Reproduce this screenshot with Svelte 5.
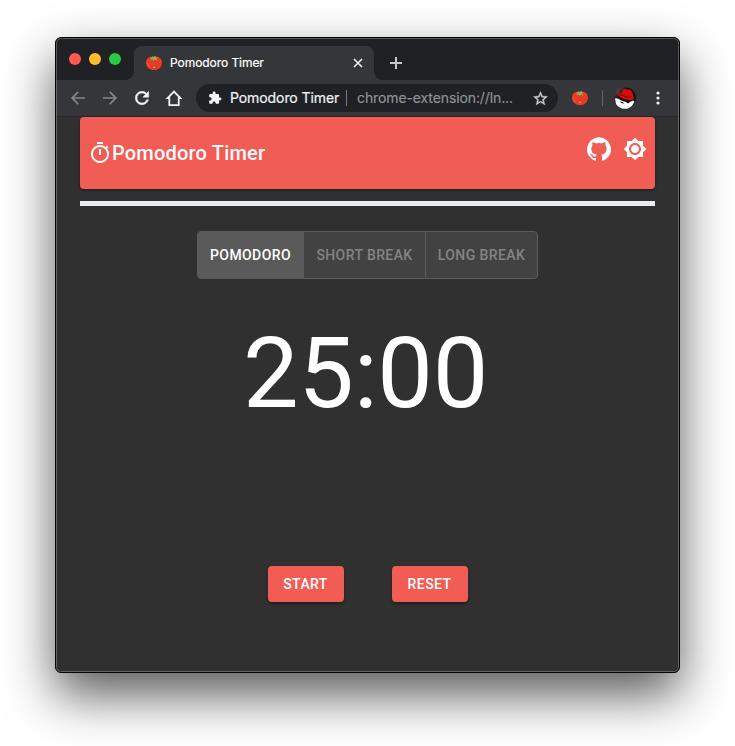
<script>
  let modes = ['Pomodoro', 'Short Break', 'Long Break'];
  let widths = [105, 122, 112];
  let active = $state(0);
</script>

{#snippet tomato()}
  <svg class="tomato" viewBox="0 0 16 16">
    <path d="M8 2C12.800.900 16 3.600 16 7.600c0 2.600-1 4.600-2.800 5.900C11.900 14.600 10 15 8 15s-3.900-.4-5.200-1.500C1 12.200 0 10.200 0 7.600 0 3.600 3.200.900 8 2z" fill="#e63b24" />
    <path d="M1.400 6.500c-.5 3 .4 5.200 2.400 6.500C2.900 11 2.200 9 1.400 6.500z" fill="#f2604a" />
    <path d="M3.600 2.300l2.900.4L6.100.700l1.600 1.200L9.800.500l-.2 2 3.100.1-2.400 1.200.8 1.700-2.500-1.100L7.500 6 6.500 4.300 4 5l1.200-1.500z" fill="#9bb04c" />
    <circle cx="8" cy="12.300" r=".9" fill="#ff9a86" />
  </svg>
{/snippet}

<div class="desktop">
  <div class="window">
    <div class="tabstrip">
      <div class="lights"><i class="red"></i><i class="amber"></i><i class="green"></i></div>
      <div class="tab">
        {@render tomato()}
        <span class="tab-title">Pomodoro Timer</span>
        <svg class="close" viewBox="0 0 10 10"><path d="M1 1l8 8M9 1L1 9" /></svg>
      </div>
      <svg class="plus" viewBox="0 0 12 12"><path d="M6 0v12M0 6h12" /></svg>
    </div>

    <div class="toolbar">
      <svg class="ico dim" viewBox="0 0 24 24"><path d="M20.500 11H7.330l5.590-5.590L11.500 4l-8 8 8 8 1.410-1.410L7.330 13H20.500v-2z" /></svg>
      <svg class="ico dim" viewBox="0 0 24 24"><path d="M12.500 4l-1.410 1.410L16.670 11H3.500v2h13.170l-5.580 5.590L12.500 20l8-8z" /></svg>
      <svg class="ico" viewBox="0 0 24 24"><path d="M17.650 6.350C16.200 4.900 14.210 4 12 4c-4.420 0-7.990 3.580-7.990 8s3.570 8 7.990 8c3.730 0 6.840-2.550 7.730-6h-2.080c-.82 2.330-3.040 4-5.650 4-3.310 0-6-2.690-6-6s2.690-6 6-6c1.660 0 3.140.69 4.220 1.780L13 11h7V4l-2.350 2.350z" stroke="#f1f3f4" stroke-width=".6" /></svg>
      <svg class="ico home" viewBox="0 0 20 20"><path d="M3.600 10.200H5.300v7h9.400v-7h1.700L10 3.600z" /></svg>
      <div class="omnibox">
        <svg class="puzzle" viewBox="0 0 24 24"><path d="M20.500 11H19V7c0-1.100-.9-2-2-2h-4V3.500C13 2.120 11.880 1 10.500 1S8 2.120 8 3.500V5H4c-1.100 0-1.990.9-1.990 2v3.800H3.500c1.490 0 2.700 1.210 2.700 2.700s-1.210 2.700-2.700 2.700H2V20c0 1.100.9 2 2 2h3.800v-1.500c0-1.490 1.210-2.700 2.700-2.700 1.490 0 2.700 1.210 2.700 2.700V22H17c1.100 0 2-.9 2-2v-4h1.500c1.380 0 2.500-1.120 2.500-2.500S21.880 11 20.500 11z" /></svg>
        <span class="origin">Pomodoro Timer</span>
        <span class="bar"></span>
        <span class="url">chrome-extension://ln...</span>
        <svg class="star" viewBox="0 0 24 24"><path d="M22 9.240l-7.190-.62L12 2 9.190 8.630 2 9.240l5.460 4.730L5.820 21 12 17.270 18.180 21l-1.630-7.030L22 9.240zM12 15.400l-3.760 2.270 1-4.280-3.320-2.880 4.380-.38L12 6.100l1.710 4.040 4.380.38-3.320 2.880 1 4.280L12 15.400z" /></svg>
      </div>
      <div class="ext">{@render tomato()}</div>
      <span class="sep"></span>
      <svg class="avatar" viewBox="0 0 22 22">
        <defs>
          <clipPath id="face"><circle cx="11" cy="11" r="10.800" /></clipPath>
          <linearGradient id="shine" x1="0" y1="0" x2="1" y2="1"><stop offset="0" stop-color="#777" /><stop offset=".35" stop-color="#0c0d0e" /></linearGradient>
        </defs>
        <g clip-path="url(#face)">
          <rect width="22" height="22" fill="url(#shine)" />
          <path d="M1 11.500c2-.6 3.500.5 5.500 1.600 2 1.100 3.500 1.700 5 1.700l2.500 1.800 2.500-2c1.500-.2 2-.8 2.700-1.400l1.300 1.500L18 19l-4 3H7l-5-4z" fill="#fff" />
          <path d="M5.500 14.500l3 .5 2 1.600-2.800-.4z" fill="#17191a" />
          <path d="M3.300 5.800c1.500-.8 3 .2 4.200.7L8.800 2.800C10.300 1.600 12 2.300 13.500 2.600c2.500-.6 4 .4 4.800 2.900l1.200 4c1.500 2.200-.5 3.700-3.700 3.600C10.500 13 2.500 9.700 3.300 5.800z" fill="#dd0808" />
          <path d="M4.500 7.200c1.700 1.500 3.200.5 5.200 1.600 2 1 4.800 2 7.500 1.300" fill="none" stroke="#6d0505" stroke-width="1" />
        </g>
      </svg>
      <svg class="dots" viewBox="0 0 4 14"><circle cx="2" cy="2" r="1.600" /><circle cx="2" cy="7" r="1.600" /><circle cx="2" cy="12" r="1.600" /></svg>
    </div>

    <main>
      <header>
        <svg class="mi" viewBox="0 0 24 24"><path d="M15 1H9v2h6V1zm-4 13h2V8h-2v6zm8.030-6.610l1.420-1.420c-.43-.51-.9-.99-1.410-1.410l-1.420 1.420C16.070 4.740 14.120 4 12 4c-4.970 0-9 4.030-9 9s4.020 9 9 9 9-4.030 9-9c0-2.120-.74-4.070-1.970-5.610zM12 20c-3.870 0-7-3.130-7-7s3.130-7 7-7 7 3.130 7 7-3.130 7-7 7z" /></svg>
        <h1>Pomodoro Timer</h1>
        <div class="actions">
          <svg class="mi" viewBox="0 0 24 24"><path d="M12 .3a12 12 0 0 0-3.800 23.400c.6.1.8-.3.8-.6v-2c-3.300.7-4-1.600-4-1.600-.6-1.400-1.400-1.800-1.400-1.800-1-.7.1-.7.1-.7 1.200 0 1.900 1.200 1.900 1.200 1 1.800 2.800 1.300 3.500 1 0-.8.4-1.300.7-1.600-2.700-.3-5.500-1.300-5.500-6 0-1.200.5-2.300 1.300-3.100-.2-.4-.6-1.600 0-3.200 0 0 1-.3 3.400 1.200a11.500 11.500 0 0 1 6 0c2.300-1.500 3.300-1.200 3.300-1.200.6 1.600.2 2.800 0 3.200.9.8 1.300 1.900 1.300 3.200 0 4.600-2.800 5.600-5.500 5.900.5.4.9 1 .9 2.200v3.300c0 .3.1.7.8.6A12 12 0 0 0 12 .3" /></svg>
          <svg class="mi" viewBox="0 0 24 24"><path d="M20 8.690V4h-4.690L12 .69 8.690 4H4v4.690L.69 12 4 15.310V20h4.690L12 23.310 15.310 20H20v-4.690L23.310 12 20 8.690zM12 18c-3.310 0-6-2.690-6-6s2.690-6 6-6 6 2.690 6 6-2.690 6-6 6zm0-10c-2.210 0-4 1.790-4 4s1.790 4 4 4 4-1.790 4-4-1.790-4-4-4z" /></svg>
        </div>
      </header>
      <div class="progress"></div>
      <div class="modes">
        {#each modes as mode, i}
          <button class:active={active === i} style="width: {widths[i]}px" onclick={() => (active = i)}>{mode}</button>
        {/each}
      </div>
      <div class="time">25:00</div>
      <div class="controls">
        <button>Start</button>
        <button>Reset</button>
      </div>
    </main>
  </div>
</div>

<style>
  :global(body) { margin: 0; background: #fff; }
  * { box-sizing: border-box; }
  svg { display: block; flex: none; }
  button { border: 0; padding: 0; margin: 0; font-family: Roboto, sans-serif; text-transform: uppercase; white-space: nowrap; }
  .desktop { width: 735px; height: 746px; padding: 37px 55px 0; overflow: hidden; }
  .window {
    position: relative; width: 625px; height: 636px; border: 1px solid #050505; border-radius: 6px;
    background: #303030; overflow: hidden; box-shadow: 0 22px 50px rgba(0, 0, 0, .65);
    display: flex; flex-direction: column;
  }
  .window::after {
    content: ''; position: absolute; inset: 0; border: 1px solid rgba(255, 255, 255, .25);
    border-radius: 5px; pointer-events: none;
  }
  .tabstrip { height: 42px; flex: none; background: #202124; display: flex; align-items: flex-start; }
  .lights { display: flex; gap: 8px; padding: 15px 0 0 13px; width: 78px; }
  .lights i { width: 12px; height: 12px; border-radius: 50%; }
  .red { background: #ff5a52; }
  .amber { background: #ffbd2e; }
  .green { background: #28ca41; }
  .tab {
    position: relative; width: 240px; height: 34px; margin-top: 8px; padding: 0 11px 0 12px;
    background: #35363a; border-radius: 8px 8px 0 0; display: flex; align-items: center;
  }
  .tab::before, .tab::after { content: ''; position: absolute; bottom: 0; width: 8px; height: 8px; }
  .tab::before { left: -8px; background: radial-gradient(circle at 0 0, transparent 7.500px, #35363a 8px); }
  .tab::after { right: -8px; background: radial-gradient(circle at 100% 0, transparent 7.500px, #35363a 8px); }
  .tomato { width: 16px; height: 16px; }
  .tab-title { font: 12px/16px Inter, sans-serif; letter-spacing: -.06px; color: #fff; -webkit-text-stroke: .2px #fff; margin-left: 8px; flex: 1; white-space: nowrap; }
  .close { width: 10px; height: 10px; fill: none; stroke: #f1f3f4; stroke-width: 1.600; }
  .plus { width: 12px; height: 12px; margin: 19px 0 0 16px; fill: none; stroke: #c6c8ca; stroke-width: 2; }
  .toolbar {
    height: 37px; flex: none; background: #35363a; border-bottom: 1px solid #292a2c;
    display: flex; align-items: center; padding-left: 12px;
  }
  .ico { width: 20px; height: 20px; margin-right: 12px; fill: #f1f3f4; }
  .dim { fill: #85868a; }
  .home { fill: none; stroke: #f1f3f4; stroke-width: 1.800; }
  .omnibox { width: 362px; height: 28px; border-radius: 14px; background: #202124; display: flex; align-items: center; font: 14px/20px Inter, sans-serif; white-space: nowrap; }
  .puzzle { width: 14px; height: 14px; margin: 0 8px 0 12px; fill: #f1f3f4; }
  .origin { width: 109px; color: #f1f3f4; letter-spacing: -.08px; -webkit-text-stroke: .2px #f1f3f4; }
  .bar { width: 1px; height: 16px; margin: 0 10px 0 7px; background: #77797d; }
  .url { color: #909398; flex: 1; letter-spacing: -.11px; -webkit-text-stroke: .15px #909398; }
  .star { width: 17px; height: 17px; margin-right: 9px; fill: #c8cacc; stroke: #c8cacc; stroke-width: .5; }
  .ext { margin: 0 14px; }
  .sep { width: 1px; height: 16px; background: #626367; }
  .avatar { width: 22px; height: 22px; margin: 0 19.500px 0 11px; }
  .dots { width: 4px; height: 14px; fill: #f1f3f4; }
  main { padding: 0 24px; display: flex; flex-direction: column; align-items: center; color: #fff; font-family: Roboto, sans-serif; }
  header {
    width: 575px; height: 72px; background: #f15c55; border-radius: 4px; display: flex; align-items: center;
    padding: 0 8px; box-shadow: 0 1px 3px rgba(0, 0, 0, .45);
  }
  .mi { width: 24px; height: 24px; fill: #fff; }
  h1 { margin: 0; flex: 1; font: 500 20px/32px Roboto, sans-serif; letter-spacing: .19px; }
  .actions { display: flex; gap: 12px; margin-bottom: 8px; }
  .progress { width: 575px; height: 5px; margin-top: 12px; background: #e9ecef; }
  .modes { height: 48px; margin-top: 25px; display: flex; border: 1px solid #5b5b5b; border-radius: 4px; background: #424242; overflow: hidden; }
  .modes button { height: 46px; background: none; color: #848484; font-size: 14px; font-weight: 500; letter-spacing: .4px; }
  .modes button + button { border-left: 1px solid #5b5b5b; }
  .modes button.active { background: #5a5a5a; color: #fff; }
  .time { margin-top: 37px; margin-right: 4px; font-size: 99px; line-height: 115px; letter-spacing: -.3px; }
  .controls { display: flex; gap: 48px; margin-top: 135px; }
  .controls button {
    width: 76px; height: 36px; border-radius: 4px; background: #f15c55; color: #fff; font-size: 14px;
    font-weight: 500; letter-spacing: .4px; box-shadow: 0 2px 3px rgba(0, 0, 0, .35);
  }
</style>
